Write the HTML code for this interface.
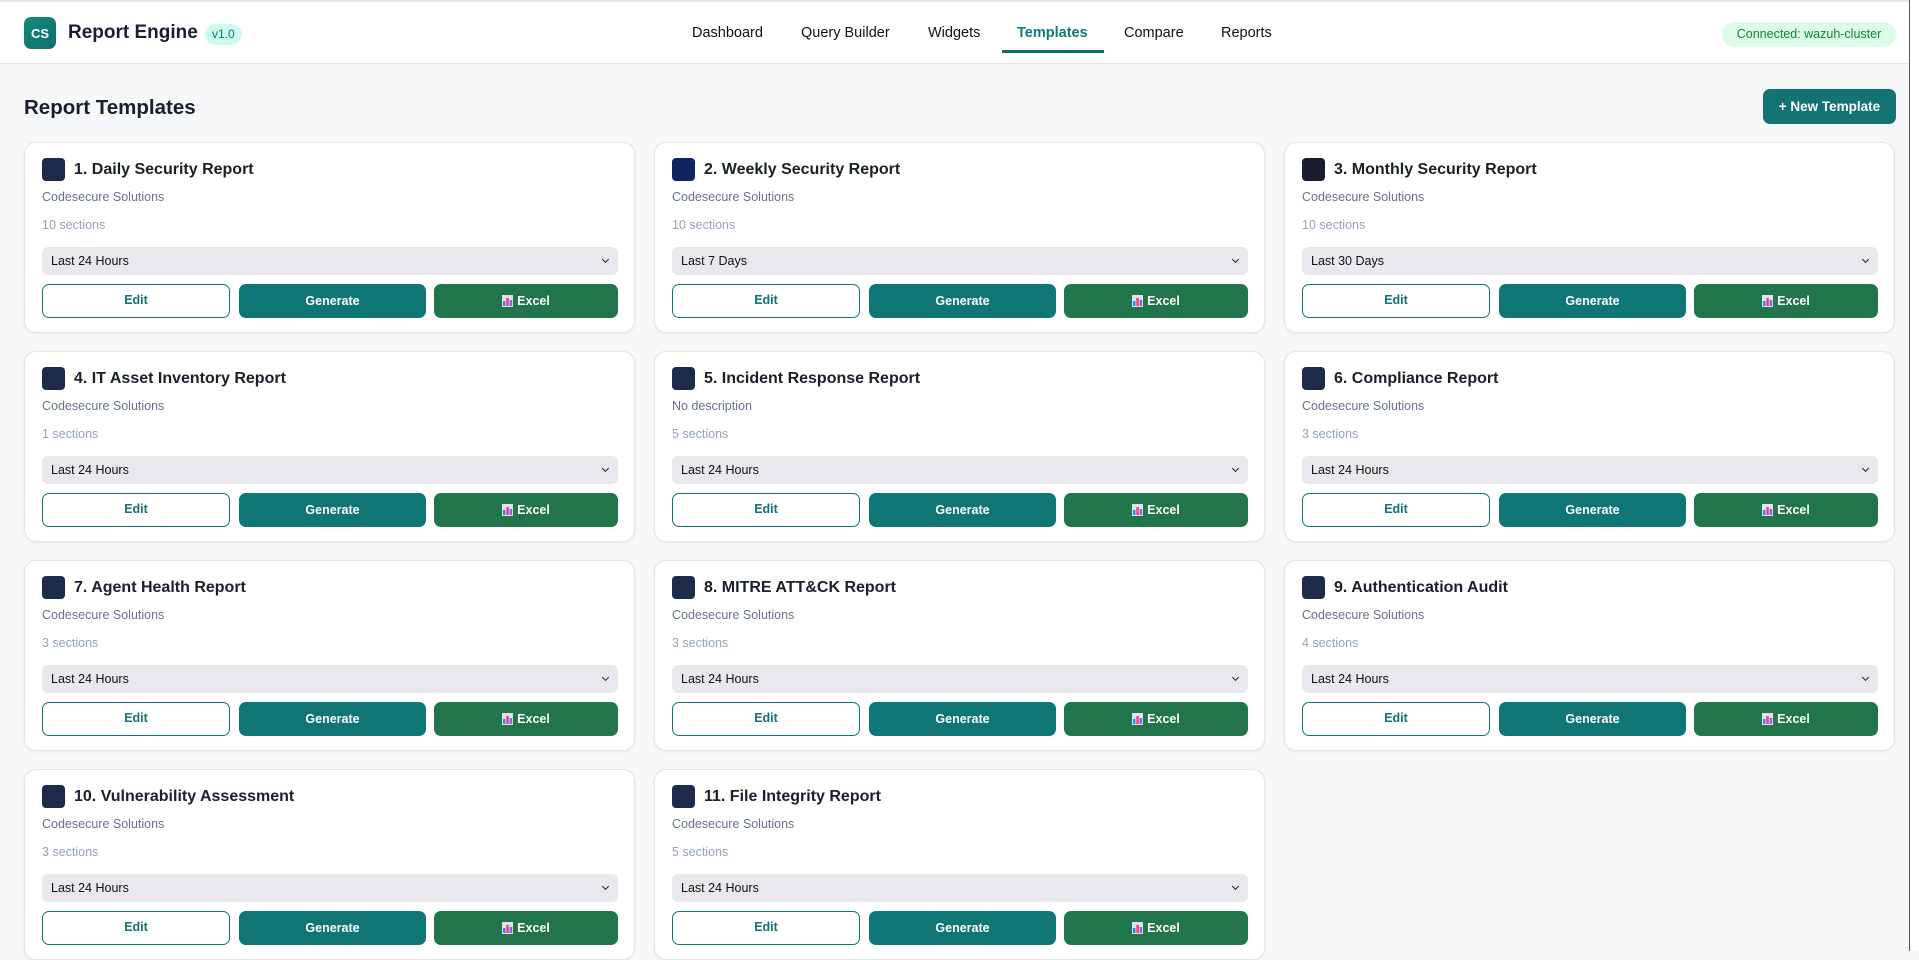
<!DOCTYPE html>
<html><head><meta charset="utf-8"><style>
*{box-sizing:border-box;margin:0;padding:0}
body{width:1919px;height:951px;overflow:hidden;background:#f7f8fa;font-family:"Liberation Sans",Arial,sans-serif;color:#1a1f2e;position:relative}
.hdr{position:absolute;left:0;top:0;width:1910px;height:64px;background:#fff;border-top:2px solid #e2e4e8;border-bottom:1px solid #e2e4e8}
.logo{position:absolute;left:24px;top:15px;width:32px;height:32px;border-radius:7px;background:linear-gradient(135deg,#148a7a,#0f6e6c);color:#fff;font-weight:700;font-size:13px;display:flex;align-items:center;justify-content:center}
.title{position:absolute;left:68px;top:20px;font-size:19px;font-weight:700;color:#1a1f2e}
.ver{position:absolute;left:205px;top:22px;height:21px;padding:0 7px;border-radius:11px;background:#ccfbef;color:#0f766e;font-size:12px;line-height:21px}
.nav a{position:absolute;top:23px;font-size:14.5px;color:#111;text-decoration:none}
.nav a.act{color:#137a78;font-weight:700}
.und{position:absolute;left:1002px;top:48px;width:102px;height:3px;background:#0f6e6c}
.conn{position:absolute;left:1722px;top:20px;width:174px;height:25px;border-radius:13px;background:#dcfce7;color:#15803d;font-size:12.5px;line-height:25px;text-align:center}
.sb{position:absolute;left:1909px;top:0;width:10px;height:951px;background:#fff;border-left:1.5px solid #555}
h1{position:absolute;left:24px;top:96px;font-size:20.5px;font-weight:700;color:#1a1f2e}
.newb{position:absolute;left:1763px;top:89px;width:133px;height:35px;border-radius:7px;background:#137373;color:#fff;font-size:13.5px;font-weight:700;line-height:35px;text-align:center}
.card{position:absolute;width:611px;height:191px;background:#fff;border:1px solid #e3e5e9;border-radius:12px;box-shadow:0 1px 3px rgba(0,0,0,.06)}
.ic{position:absolute;left:17px;top:15px;width:23px;height:23px;border-radius:4px;background:#1e2a4a}
.ct{position:absolute;left:49px;top:18px;font-size:16px;font-weight:700;color:#1a1f2e}
.cs{position:absolute;left:17px;top:47px;font-size:12.5px;color:#64748b}
.cn{position:absolute;left:17px;top:75px;font-size:12.5px;color:#94a3b8}
.sel{position:absolute;left:17px;top:104px;width:576px;height:28px;border-radius:6px;background:#e8e8ed;font-size:12.5px;line-height:28px;padding-left:9px;color:#111}
.sel:after{content:"";position:absolute;right:10px;top:10px;width:4px;height:4px;border-right:1.5px solid #222;border-bottom:1.5px solid #222;transform:rotate(45deg)}
.b{position:absolute;top:141px;height:34px;border-radius:7px;font-size:12.5px;font-weight:700;text-align:center;line-height:34px}
.e{left:17px;width:188px;border:1.3px solid #137373;color:#137373;background:#fff;line-height:31px}
.g{left:214px;width:187px;background:#107575;color:#fff}
.x{left:409px;width:184px;background:#22754a;color:#fff}
.x svg{vertical-align:-2px;margin-right:4px}
</style></head><body>
<div class="hdr">
<div class="logo">CS</div><div class="title">Report Engine</div><div class="ver">v1.0</div>
<div class="nav"><a style="left:692px">Dashboard</a><a style="left:801px">Query Builder</a><a style="left:928px">Widgets</a><a class="act" style="left:1017px">Templates</a><a style="left:1124px">Compare</a><a style="left:1221px">Reports</a></div>
<div class="und"></div>
<div class="conn">Connected: wazuh-cluster</div>
</div>
<div class="sb"></div>
<h1>Report Templates</h1>
<div class="newb">+ New Template</div>
<div id="g"></div>
<script>
var d=[["1. Daily Security Report","Codesecure Solutions","10 sections","Last 24 Hours","#1e2a4a"],
["2. Weekly Security Report","Codesecure Solutions","10 sections","Last 7 Days","#10245f"],
["3. Monthly Security Report","Codesecure Solutions","10 sections","Last 30 Days","#1a1b2e"],
["4. IT Asset Inventory Report","Codesecure Solutions","1 sections","Last 24 Hours","#1e2a4a"],
["5. Incident Response Report","No description","5 sections","Last 24 Hours","#1e2a4a"],
["6. Compliance Report","Codesecure Solutions","3 sections","Last 24 Hours","#1e2a4a"],
["7. Agent Health Report","Codesecure Solutions","3 sections","Last 24 Hours","#1e2a4a"],
["8. MITRE ATT&amp;CK Report","Codesecure Solutions","3 sections","Last 24 Hours","#1e2a4a"],
["9. Authentication Audit","Codesecure Solutions","4 sections","Last 24 Hours","#1e2a4a"],
["10. Vulnerability Assessment","Codesecure Solutions","3 sections","Last 24 Hours","#1e2a4a"],
["11. File Integrity Report","Codesecure Solutions","5 sections","Last 24 Hours","#1e2a4a"]];
var xs=[24,654,1284],ys=[142,351,560,769],h="";
var ico='<svg width="11" height="12" viewBox="0 0 11 12"><rect width="11" height="12" fill="#dde3ea"/><rect x="1" y="6" width="2.5" height="5" fill="#3b82f6"/><rect x="4.3" y="3" width="2.5" height="8" fill="#ef4471"/><rect x="7.6" y="5" width="2.5" height="6" fill="#8b5cf6"/></svg>';
d.forEach(function(c,i){h+='<div class="card" style="left:'+xs[i%3]+'px;top:'+ys[Math.floor(i/3)]+'px"><div class="ic" style="background:'+c[4]+'"></div><div class="ct">'+c[0]+'</div><div class="cs">'+c[1]+'</div><div class="cn">'+c[2]+'</div><div class="sel">'+c[3]+'</div><div class="b e">Edit</div><div class="b g">Generate</div><div class="b x">'+ico+'Excel</div></div>';});
document.getElementById("g").innerHTML=h;
</script>
</body></html>
